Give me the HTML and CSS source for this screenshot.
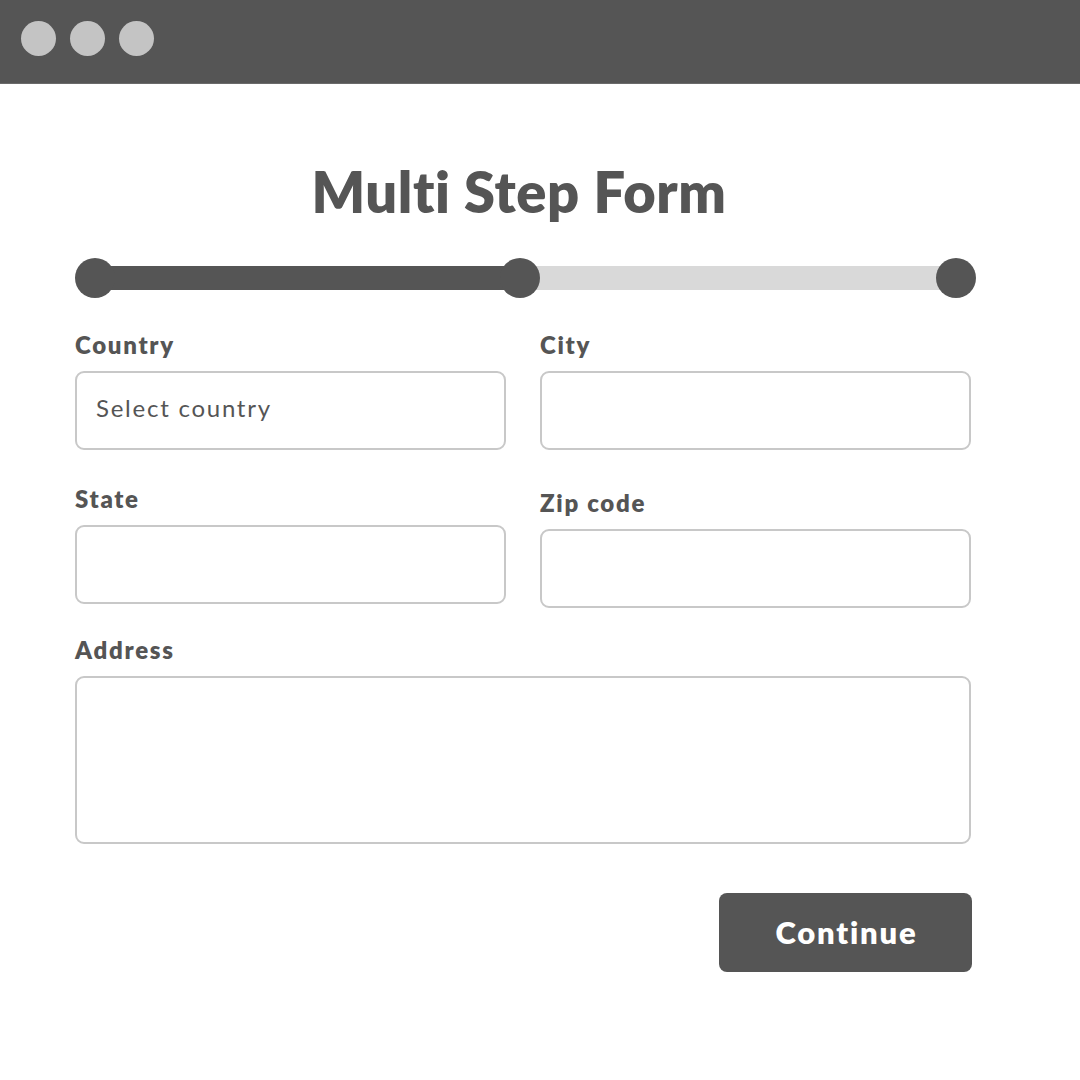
FILE: index.html
```html
<!DOCTYPE html>
<html lang="en">
<head>
<meta charset="utf-8">
<title>Multi Step Form</title>
<link rel="stylesheet" href="styles.css">
</head>
<body>
<header class="titlebar">
  <span class="light"></span>
  <span class="light"></span>
  <span class="light"></span>
</header>
<main class="page">
  <h1 class="title">Multi Step Form</h1>
  <div class="progress">
    <span class="step"></span>
    <span class="seg seg--done"></span>
    <span class="step"></span>
    <span class="seg seg--todo"></span>
    <span class="step"></span>
  </div>
  <form class="form">
    <div class="field">
      <label class="label">Country</label>
      <div class="box"><span class="placeholder">Select country</span></div>
    </div>
    <div class="field">
      <label class="label">City</label>
      <div class="box"></div>
    </div>
    <div class="field field--state">
      <label class="label">State</label>
      <div class="box"></div>
    </div>
    <div class="field field--zip">
      <label class="label">Zip code</label>
      <div class="box"></div>
    </div>
    <div class="field field--wide">
      <label class="label">Address</label>
      <div class="box box--area"></div>
    </div>
    <div class="actions">
      <button type="button" class="btn">Continue</button>
    </div>
  </form>
</main>
</body>
</html>
```
FILE: styles.css
```css
* { box-sizing: border-box; }

html, body {
  margin: 0;
  padding: 0;
  background: #ffffff;
  font-family: "Lato", "Open Sans", sans-serif;
  font-variant-ligatures: none;
  color: #555555;
}

.titlebar {
  height: 84px;
  background: #555555;
  display: flex;
  align-items: flex-start;
  gap: 14px;
  padding: 21px 0 0 21px;
  border-bottom: 1px solid #6a6a6a;
}

.light {
  width: 35px;
  height: 35px;
  border-radius: 50%;
  background: #c4c4c4;
}

.page {
  padding: 76px 0 0 75px;
  width: 976px;
}

.title {
  margin: 0;
  padding-right: 13px;
  font-size: 56px;
  line-height: 64px;
  font-weight: 800;
  letter-spacing: 0.6px;
  text-align: center;
  color: #555555;
}

.progress {
  margin-top: 34px;
  width: 901px;
  height: 40px;
  display: flex;
  align-items: center;
}

.step {
  position: relative;
  z-index: 1;
  flex: 0 0 40px;
  height: 40px;
  border-radius: 50%;
  background: #555555;
}

.seg {
  height: 24px;
  margin: 0 -20px;
}

.seg--done {
  flex: 0 0 425px;
  background: #555555;
}

.seg--todo {
  flex: 1 1 auto;
  background: #d9d9d9;
}

.form {
  margin-top: 33px;
  width: 896px;
  display: grid;
  grid-template-columns: 431px 431px;
  column-gap: 34px;
  row-gap: 28px;
  align-items: start;
}

.field {
  display: flex;
  flex-direction: column;
}

.field--state { margin-top: 7px; }
.field--zip { margin-top: 11px; }
.field--wide { grid-column: 1 / -1; }

.label {
  font-size: 24px;
  line-height: 28px;
  font-weight: 800;
  letter-spacing: 1.7px;
  color: #555555;
  margin-bottom: 12px;
}

.box {
  height: 79px;
  border: 2px solid #c8c8c8;
  border-radius: 9px;
  background: #ffffff;
  display: flex;
  align-items: center;
  padding: 0 19px 6px;
}

.box--area { height: 168px; }

.placeholder {
  font-size: 24px;
  font-weight: 400;
  color: #555555;
  letter-spacing: 1.75px;
}

.actions {
  grid-column: 1 / -1;
  display: flex;
  justify-content: flex-end;
  margin-top: 21px;
  margin-right: -1px;
}

.btn {
  width: 253px;
  height: 79px;
  border: 0;
  border-radius: 8px;
  background: #555555;
  color: #ffffff;
  font-family: "Lato", "Open Sans", sans-serif;
  font-size: 31px;
  font-weight: 800;
  letter-spacing: 1.8px;
  padding: 0 0 2px 2px;
}
```
